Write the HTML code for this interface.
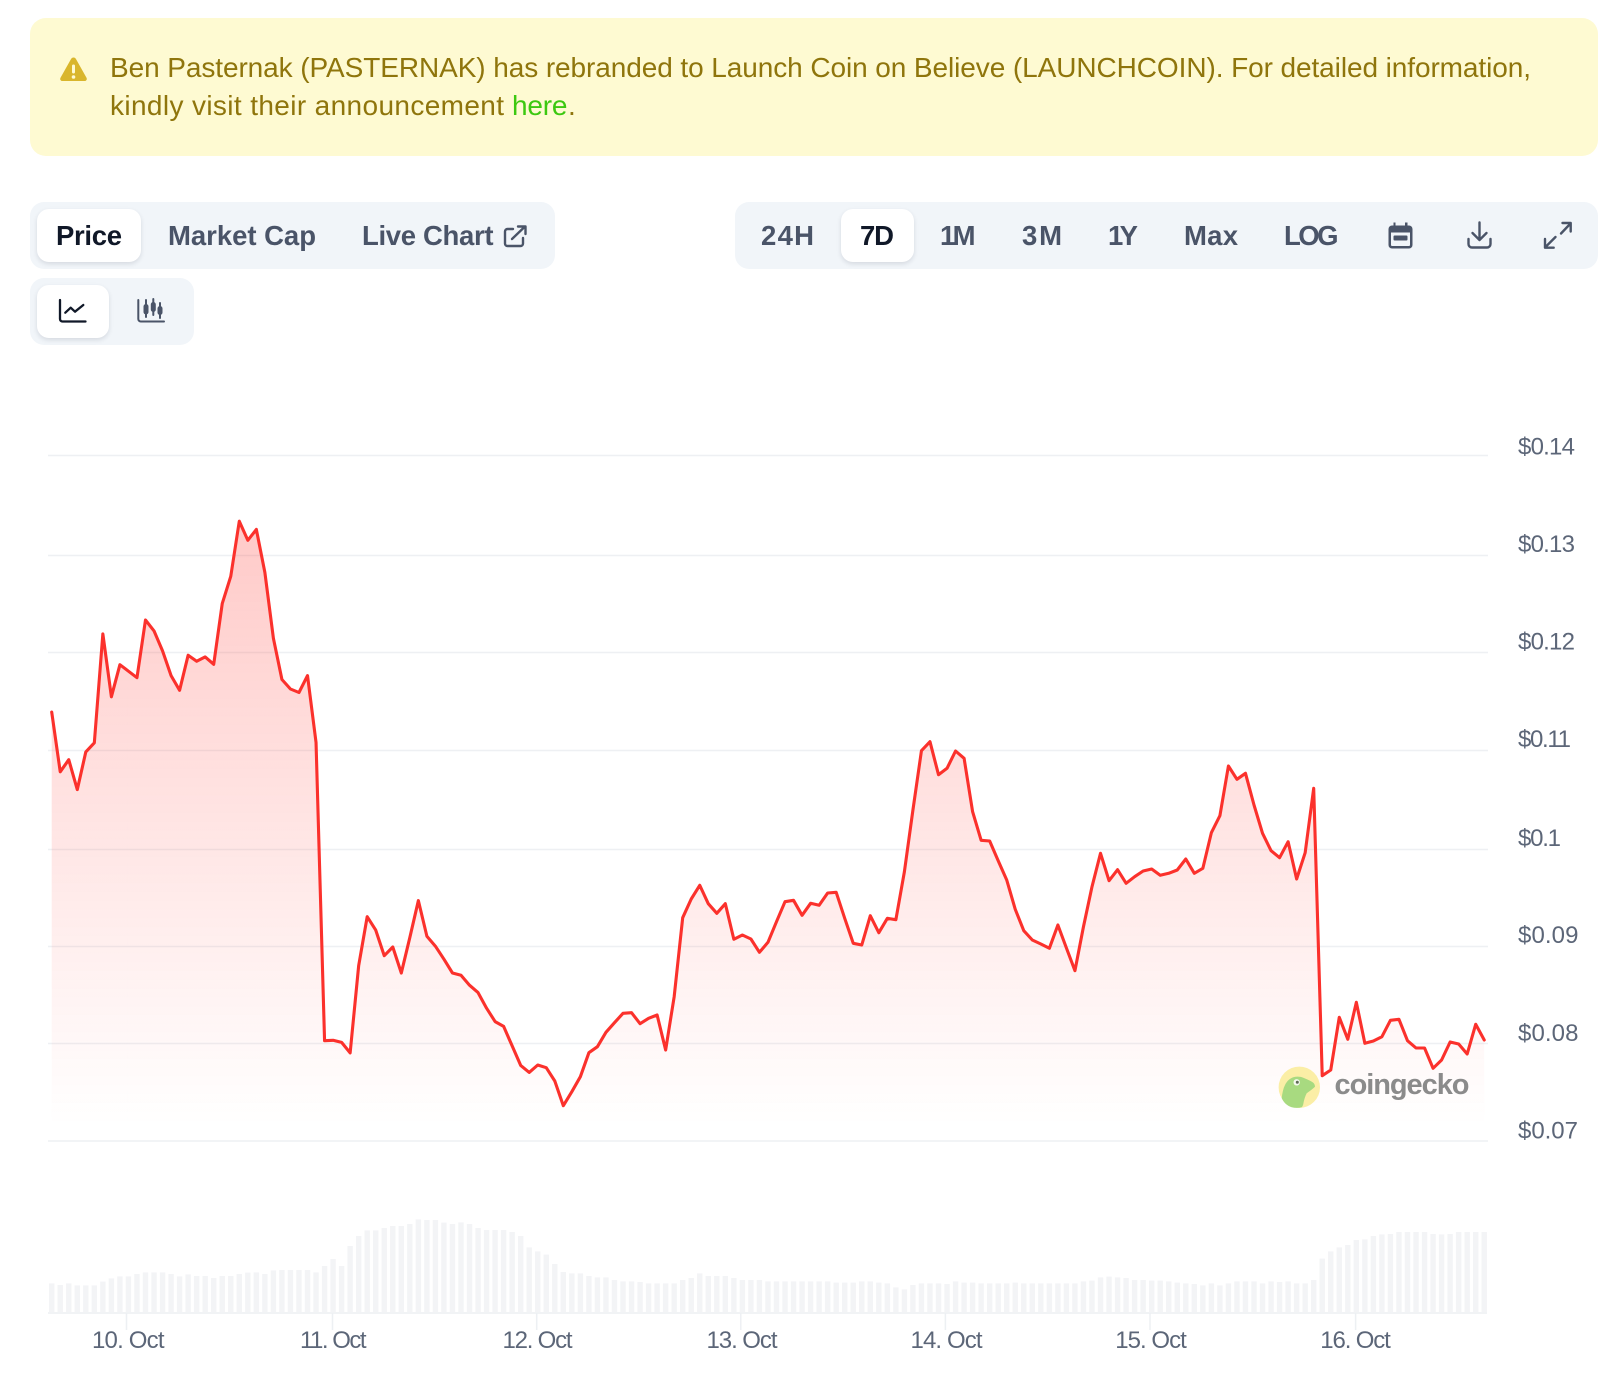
<!DOCTYPE html>
<html lang="en">
<head>
<meta charset="utf-8">
<title>Ben Pasternak price chart</title>
<style>
html,body{margin:0;padding:0;background:#fff;width:1600px;height:1391px;overflow:hidden;font-family:"Liberation Sans",sans-serif}
.b{position:absolute;box-sizing:border-box}
.bar{background:#f1f5f9;border-radius:14px}
.on{background:#fff;border-radius:12px;box-shadow:0 2px 5px rgba(30,40,60,.13)}
svg{position:absolute;left:0;top:0;filter:blur(.3px)}
</style>
</head>
<body>
<div class="b" style="left:30px;top:18px;width:1568px;height:138px;background:#fefad2;border-radius:16px"></div>
<div class="b bar" style="left:30px;top:202px;width:525px;height:67px"></div>
<div class="b on" style="left:37px;top:209px;width:104px;height:53px"></div>
<div class="b bar" style="left:735px;top:202px;width:863px;height:67px"></div>
<div class="b on" style="left:841px;top:209px;width:73px;height:53px"></div>
<div class="b bar" style="left:30px;top:278px;width:164px;height:67px"></div>
<div class="b on" style="left:37px;top:285px;width:72px;height:53px"></div>

<svg width="1600" height="1391" viewBox="0 0 1600 1391" xmlns="http://www.w3.org/2000/svg" font-family="'Liberation Sans',sans-serif">
<defs>
<linearGradient id="g" gradientUnits="userSpaceOnUse" x1="0" y1="520" x2="0" y2="1125">
<stop offset="0" stop-color="#ff3a33" stop-opacity=".27"/>
<stop offset="1" stop-color="#ff3a33" stop-opacity="0"/>
</linearGradient>
</defs>

<!-- banner -->
<path d="M73.5 57.500c1.200 0 2 .6 2.600 1.700l10.400 18.500c.8 1.500-.1 3.300-1.900 3.300H62.400c-1.800 0-2.700-1.800-1.900-3.300l10.400-18.500c.6-1.100 1.400-1.700 2.600-1.700z" fill="#d9b62c"/>
<rect x="72" y="64.500" width="3" height="9" rx="1.500" fill="#fefad2"/>
<circle cx="73.500" cy="77" r="1.800" fill="#fefad2"/>
<g font-size="28" fill="#8f750c">
<text x="110" y="77" textLength="1421">Ben Pasternak (PASTERNAK) has rebranded to Launch Coin on Believe (LAUNCHCOIN). For detailed information,</text>
<text x="110" y="115" textLength="394">kindly visit their announcement</text>
<text x="512" y="115" textLength="55.500" fill="#3cc810">here</text>
<text x="568" y="115">.</text>
</g>

<!-- tabs -->
<g font-size="27.500" font-weight="700" fill="#4a5468">
<text x="56" y="245" textLength="66" fill="#101828">Price</text>
<text x="168" y="245" textLength="148">Market Cap</text>
<text x="362" y="245" textLength="131.500">Live Chart</text>
<text x="761" y="245" textLength="53">24H</text>
<text x="860" y="245" textLength="34" fill="#101828">7D</text>
<text x="940" y="245" textLength="35.500">1M</text>
<text x="1022" y="245" textLength="40">3M</text>
<text x="1108" y="245" textLength="30">1Y</text>
<text x="1184" y="245" textLength="54">Max</text>
<text x="1284" y="245" textLength="54.500">LOG</text>
</g>

<!-- external link -->
<g fill="none" stroke="#4a5468" stroke-width="2.400" stroke-linecap="round" stroke-linejoin="round">
<path d="M513 229h-5.500a2.500 2.500 0 0 0-2.500 2.500v12a2.500 2.500 0 0 0 2.500 2.500h13a2.500 2.500 0 0 0 2.500-2.500V238"/>
<path d="M512 239l13-12.500M518 226.500h7.500V234"/>
</g>

<!-- calendar -->
<path d="M1393.500 222.500v3h-1.500a3.500 3.500 0 0 0-3.500 3.500v16a3.500 3.500 0 0 0 3.500 3.500h17a3.500 3.500 0 0 0 3.500-3.500v-16a3.500 3.500 0 0 0-3.500-3.500h-1.500v-3h-2.500v3h-9.500v-3zM1391 232.500h19v12.500a1 1 0 0 1-1 1h-17a1 1 0 0 1-1-1z" fill="#4a5468"/>
<rect x="1393.500" y="235.500" width="14" height="5" rx="1" fill="#4a5468"/>
<!-- download -->
<g fill="none" stroke="#4a5468" stroke-width="2.400" stroke-linecap="round" stroke-linejoin="round">
<path d="M1479.500 222.500v17M1472.500 233l7 7 7-7"/>
<path d="M1468.500 239v5a3.500 3.500 0 0 0 3.500 3.500h15a3.500 3.500 0 0 0 3.500-3.500v-5"/>
<!-- expand -->
<path d="M1561 233.500l9.500-10M1562.500 223h8.200v8.500"/>
<path d="M1555.500 237l-10 10M1545 239v8.700h8.700"/>
</g>

<!-- line icon -->
<g fill="none" stroke="#101828" stroke-width="2.300" stroke-linecap="round" stroke-linejoin="round">
<path d="M60 300v19a2.500 2.500 0 0 0 2.500 2.500H85.500"/>
<path d="M65.300 312.700l5.400-5 4.300 4 8.300-6.700"/>
</g>
<!-- candle icon -->
<g fill="none" stroke="#4a5468" stroke-width="2" stroke-linecap="round" stroke-linejoin="round">
<path d="M138.300 300v19a2.500 2.500 0 0 0 2.500 2.500H164"/>
<path d="M146 300v17M153.300 299v16M160 303v15"/>
</g>
<g fill="#4a5468">
<rect x="143.500" y="304" width="5" height="10.500" rx="2.500"/>
<rect x="150.800" y="302" width="5" height="10" rx="2.500"/>
<rect x="157.500" y="306" width="5" height="9" rx="2.500"/>
</g>

<!-- grid -->
<g stroke="#eef0f3" stroke-width="1.500">
<path d="M48 455.500H1488M48 555.500H1488M48 652.500H1488M48 750.500H1488M48 849.500H1488M48 946.500H1488M48 1043.500H1488M48 1141H1488"/>
</g>

<!-- y labels -->
<g font-size="24" fill="#5c6678">
<text x="1518" y="454.500" textLength="57">$0.14</text>
<text x="1518" y="552" textLength="57">$0.13</text>
<text x="1518" y="649.500" textLength="57">$0.12</text>
<text x="1518" y="747" textLength="53">$0.11</text>
<text x="1518" y="846" textLength="43">$0.1</text>
<text x="1518" y="943" textLength="60.500">$0.09</text>
<text x="1518" y="1041" textLength="60.500">$0.08</text>
<text x="1518" y="1138.500" textLength="60">$0.07</text>
</g>

<!-- chart -->
<g transform="translate(51.7 0) scale(8.527 1)">
<polygon fill="url(#g)" points="0,1141 0,712 1,771.8 2,759.7 3,789.6 4,751.9 5,742.8 6,633.9 7,696.8 8,664.7 9,671.2 10,677.7 11,620 12,630.9 13,650.9 14,675.6 15,690.3 16,655.2 17,661.3 18,656.9 19,664.3 20,603.6 21,576.3 22,521.2 23,540.3 24,529.4 25,572.4 26,638.3 27,679.5 28,689 29,692.5 30,675.6 31,742.4 32,1040.7 33,1040.3 34,1042.4 35,1052.9 36,965.7 37,916.7 38,930.1 39,955.7 40,947 41,973 42,937.5 43,900.6 44,936.2 45,946.2 46,959.2 47,973 48,975.2 49,985.2 50,992.6 51,1008.2 52,1021.6 53,1026.4 54,1045.9 55,1065.4 56,1072.4 57,1065 58,1067.7 59,1081 60,1105.7 61,1091.7 62,1076.7 63,1052.7 64,1046.7 65,1032.3 66,1022.7 67,1013.3 68,1012.7 69,1023.7 70,1018.3 71,1015 72,1050 73,996.7 74,917.7 75,899 76,885.3 77,903.7 78,913.3 79,903.7 80,939.3 81,935 82,939 83,952.3 84,942.3 85,921.7 86,901.7 87,900.3 88,915.3 89,903.3 90,905.3 91,893 92,892.3 93,918.3 94,943.3 95,945 96,915.7 97,932.7 98,918.3 99,919.7 100,871.7 101,810 102,750.7 103,741.7 104,774.7 105,768.3 106,751 107,758.3 108,811.7 109,840.3 110,841 111,860.7 112,880 113,909.3 114,930.7 115,940 116,944 117,948.3 118,925 119,948 120,970.7 121,926.7 122,886.7 123,853.3 124,880.7 125,869.7 126,883.3 127,876.7 128,871 129,869 130,875.3 131,873.3 132,870 133,859 134,873.3 135,868.3 136,832.7 137,815.7 138,766 139,779.3 140,773.3 141,805 142,833.3 143,850.7 144,857.7 145,841.7 146,879 147,852.7 148,788.3 149,1075.7 150,1070 151,1017.3 152,1039.3 153,1002.3 154,1043.3 155,1041 156,1036.7 157,1020.3 158,1019.3 159,1040.7 160,1048 161,1048 162,1068.3 163,1060 164,1042 165,1044 166,1054 167,1024.3 168,1040 168,1141"/>
<polyline vector-effect="non-scaling-stroke" fill="none" stroke="#fb312c" stroke-width="3.100" stroke-linejoin="round" stroke-linecap="round" points="0,712 1,771.8 2,759.7 3,789.6 4,751.9 5,742.8 6,633.9 7,696.8 8,664.7 9,671.2 10,677.7 11,620 12,630.9 13,650.9 14,675.6 15,690.3 16,655.2 17,661.3 18,656.9 19,664.3 20,603.6 21,576.3 22,521.2 23,540.3 24,529.4 25,572.4 26,638.3 27,679.5 28,689 29,692.5 30,675.6 31,742.4 32,1040.7 33,1040.3 34,1042.4 35,1052.9 36,965.7 37,916.7 38,930.1 39,955.7 40,947 41,973 42,937.5 43,900.6 44,936.2 45,946.2 46,959.2 47,973 48,975.2 49,985.2 50,992.6 51,1008.2 52,1021.6 53,1026.4 54,1045.9 55,1065.4 56,1072.4 57,1065 58,1067.7 59,1081 60,1105.7 61,1091.7 62,1076.7 63,1052.7 64,1046.7 65,1032.3 66,1022.7 67,1013.3 68,1012.7 69,1023.7 70,1018.3 71,1015 72,1050 73,996.7 74,917.7 75,899 76,885.3 77,903.7 78,913.3 79,903.7 80,939.3 81,935 82,939 83,952.3 84,942.3 85,921.7 86,901.7 87,900.3 88,915.3 89,903.3 90,905.3 91,893 92,892.3 93,918.3 94,943.3 95,945 96,915.7 97,932.7 98,918.3 99,919.7 100,871.7 101,810 102,750.7 103,741.7 104,774.7 105,768.3 106,751 107,758.3 108,811.7 109,840.3 110,841 111,860.7 112,880 113,909.3 114,930.7 115,940 116,944 117,948.3 118,925 119,948 120,970.7 121,926.7 122,886.7 123,853.3 124,880.7 125,869.7 126,883.3 127,876.7 128,871 129,869 130,875.3 131,873.3 132,870 133,859 134,873.3 135,868.3 136,832.7 137,815.7 138,766 139,779.3 140,773.3 141,805 142,833.3 143,850.7 144,857.7 145,841.7 146,879 147,852.7 148,788.3 149,1075.7 150,1070 151,1017.3 152,1039.3 153,1002.3 154,1043.3 155,1041 156,1036.7 157,1020.3 158,1019.3 159,1040.7 160,1048 161,1048 162,1068.3 163,1060 164,1042 165,1044 166,1054 167,1024.3 168,1040"/>
</g>

<!-- coingecko watermark -->
<circle cx="1299.300" cy="1087.300" r="20.700" fill="#fbeea6"/>
<path d="M1281.700 1098c.6-5 1.500-9.500 3.300-13 2-4 5-6.700 8.300-7.700 3.500-1 7-.8 10 .4 4 1.600 8 3.300 10 5 1.200 1 1.700 2.500 1.700 4-2 2-5 4-8.300 6.600-1.600 3-2.700 6.700-3.400 10.700-.2 1.200-.8 2.500-1.600 3.300-3.300.8-6.700.8-10 0-4.500-1.600-8-4.500-10-9.300z" fill="#a8da80"/>
<circle cx="1296.700" cy="1082.300" r="3.200" fill="#f4f8ee"/>
<circle cx="1297.300" cy="1082.300" r="1.500" fill="#5d6a55"/>
<text x="1334.500" y="1094" font-size="29" font-weight="700" fill="#8b8b8b" textLength="135">coingecko</text>

<!-- volume -->
<g transform="translate(51.7 1190) scale(8.527 .33333)">
<path vector-effect="non-scaling-stroke" fill="none" stroke="#f3f4f6" stroke-width="5.400" d="M0 280V368M1 285V368M2 280V368M3 286V368M4 286V368M5 286V368M6 275V368M7 265V368M8 259V368M9 259V368M10 252V368M11 247V368M12 247V368M13 247V368M14 252V368M15 259V368M16 253V368M17 258V368M18 258V368M19 264V368M20 258V368M21 258V368M22 252V368M23 248V368M24 247V368M25 252V368M26 241V368M27 240V368M28 240V368M29 240V368M30 240V368M31 247V368M32 228V368M33 207V368M34 228V368M35 168V368M36 138V368M37 121V368M38 121V368M39 114V368M40 108V368M41 108V368M42 102V368M43 88V368M44 90V368M45 90V368M46 98V368M47 102V368M48 97V368M49 102V368M50 114V368M51 120V368M52 120V368M53 120V368M54 126V368M55 138V368M56 172V368M57 184V368M58 194V368M59 222V368M60 246V368M61 250V368M62 250V368M63 258V368M64 262V368M65 262V368M66 270V368M67 274V368M68 274V368M69 276V368M70 280V368M71 280V368M72 280V368M73 280V368M74 270V368M75 264V368M76 250V368M77 258V368M78 258V368M79 258V368M80 264V368M81 270V368M82 270V368M83 270V368M84 274V368M85 274V368M86 274V368M87 274V368M88 274V368M89 274V368M90 274V368M91 274V368M92 278V368M93 278V368M94 278V368M95 274V368M96 274V368M97 278V368M98 280V368M99 292V368M100 298V368M101 285V368M102 280V368M103 280V368M104 280V368M105 282V368M106 274V368M107 278V368M108 278V368M109 280V368M110 280V368M111 280V368M112 280V368M113 278V368M114 280V368M115 280V368M116 280V368M117 280V368M118 280V368M119 280V368M120 280V368M121 274V368M122 272V368M123 262V368M124 260V368M125 262V368M126 264V368M127 270V368M128 270V368M129 272V368M130 272V368M131 274V368M132 278V368M133 280V368M134 282V368M135 286V368M136 280V368M137 286V368M138 280V368M139 274V368M140 274V368M141 274V368M142 280V368M143 274V368M144 276V368M145 274V368M146 280V368M147 280V368M148 270V368M149 206V368M150 184V368M151 172V368M152 165V368M153 150V368M154 148V368M155 138V368M156 133V368M157 132V368M158 126V368M159 126V368M160 126V368M161 126V368M162 132V368M163 133V368M164 132V368M165 126V368M166 126V368M167 126V368M168 126V368"/>
</g>
<path d="M48 1313H1487" stroke="#f1f3f5" stroke-width="2"/>
<path d="M126.500 1313v17M332.500 1313v17M536.700 1313v17M740.800 1313v17M945.400 1313v17M1150 1313v17M1355.600 1313v17" stroke="#edf0f3" stroke-width="1.500"/>

<!-- x labels -->
<g font-size="24" fill="#5c6678">
<text x="92" y="1348" textLength="72.500">10. Oct</text>
<text x="300" y="1348" textLength="66.500">11. Oct</text>
<text x="502.500" y="1348" textLength="70">12. Oct</text>
<text x="706.500" y="1348" textLength="71">13. Oct</text>
<text x="910.500" y="1348" textLength="72">14. Oct</text>
<text x="1115.300" y="1348" textLength="71.500">15. Oct</text>
<text x="1320.300" y="1348" textLength="70.500">16. Oct</text>
</g>
</svg>
</body>
</html>
